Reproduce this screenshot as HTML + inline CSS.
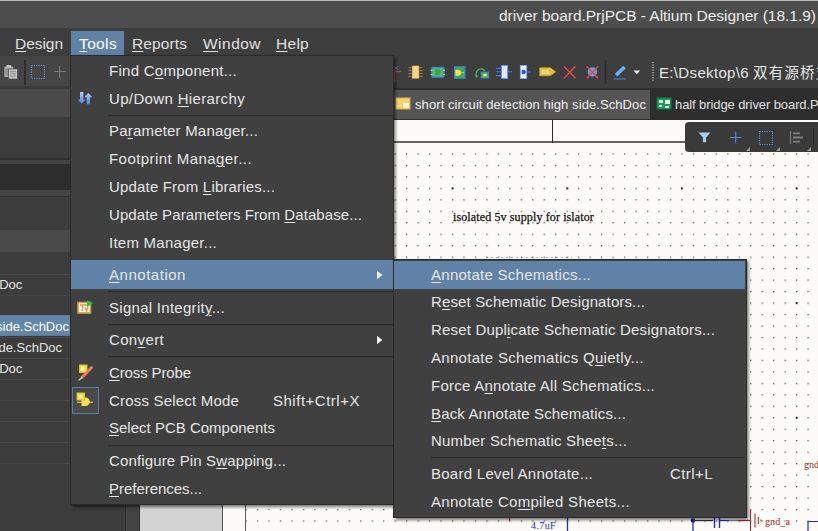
<!DOCTYPE html>
<html><head><meta charset="utf-8"><title>Altium Designer</title>
<style>
html,body{margin:0;padding:0;}
body{width:818px;height:531px;overflow:hidden;position:relative;background:#3f3f3f;font-family:"Liberation Sans","Noto Sans CJK SC",sans-serif;}
.a{position:absolute;}
.t{position:absolute;line-height:28px;height:28px;white-space:nowrap;font-family:"Liberation Sans","Noto Sans CJK SC",sans-serif;}
.t u{text-decoration:underline;text-underline-offset:1.6px;text-decoration-thickness:1px;}
.sep{left:108px;width:285px;height:2px;background:linear-gradient(to bottom,#2c2c2c 0,#2c2c2c 1px,#393939 1px,#393939 2px);}

</style></head><body>
<!-- base chrome -->
<div class="a" style="left:0;top:0;width:818px;height:28px;background:#4d4d4d;"></div>
<div class="a" style="left:0;top:0;width:818px;height:1px;background:#bdbdbd;"></div>
<div class="a" style="left:0;top:28px;width:818px;height:28px;background:#3e3e3e;"></div>
<div class="a" style="left:71px;top:31px;width:53px;height:25px;background:#5f82a6;"></div>
<!-- toolbar -->
<div class="a" style="left:0;top:56px;width:818px;height:32px;background:#3e3e3e;"></div>
<div class="a" style="left:0;top:56px;width:70px;height:30px;background:#454545;"></div>
<div class="a" style="left:0;top:86px;width:70px;height:3px;background:#3a3a3a;"></div>
<svg class="a" style="left:0;top:56px;" width="70" height="32" viewBox="0 0 70 32">
  <rect x="4.3" y="10.5" width="9" height="10.5" rx="0.8" fill="#a8a8a8"/>
  <rect x="6.6" y="9" width="4.4" height="2.6" rx="0.6" fill="#c6c6c6"/>
  <path d="M5.6 13.5h4M5.6 15.8h3M5.6 18.1h3" stroke="#6a6a6a" stroke-width="0.8"/>
  <rect x="8.6" y="13" width="8.8" height="10" fill="#c2c2c2" stroke="#505050" stroke-width="0.7"/>
  <path d="M10.2 15.6h5.6M10.2 17.8h5.6M10.2 20h5.6" stroke="#7a7a7a" stroke-width="0.8"/>
  <rect x="24" y="4" width="2" height="25" fill="#2d2d2d"/>
  <rect x="31.5" y="9.5" width="13" height="13" fill="none" stroke="#6a8cd8" stroke-width="1.2" stroke-dasharray="1.3 1.05"/>
  <path d="M54 15.5h12M59.5 10v12" stroke="#7a7a7a" stroke-width="1" fill="none"/>
</svg>
<!-- toolbar icons right -->
<svg class="a" style="left:393px;top:56px;" width="270" height="32" viewBox="393 56 270 32">
  <!-- partial icon -->
  <path d="M394.5 71.7v10M394.5 71.7h6.5" stroke="#c04a4a" stroke-width="1" fill="none"/>
  <path d="M394.5 66.3l3.6 3.6M398.1 66.3l-3.6 3.6" stroke="#5a84d0" stroke-width="0.9" fill="none"/>
  <!-- IC yellow -->
  <path d="M408.3 67.7h14.4M408.3 70.6h14.4M408.3 73.5h14.4M408.3 76.4h14.4" stroke="#b8923c" stroke-width="0.8"/>
  <rect x="412.3" y="66" width="6.5" height="12.2" fill="#f7d488" stroke="#ecc060" stroke-width="0.6"/>
  <!-- blue/green -->
  <rect x="431.8" y="67.6" width="12" height="9.4" rx="1" fill="#4fc06a" stroke="#4a80d8" stroke-width="1.5"/>
  <rect x="435" y="69.5" width="5.6" height="5.6" fill="#38a855"/>
  <path d="M430.5 70.2h2.2M430.5 74.6h2.2M442.9 70.2h2.2M442.9 74.6h2.2" stroke="#d8e060" stroke-width="1"/>
  <!-- green sq with yellow gate -->
  <rect x="454.5" y="66.8" width="10.4" height="11.4" fill="#3aa858" stroke="#4a80d8" stroke-width="1.2"/>
  <path d="M455.4 69.7h2.6a3 3 0 0 1 0 6h-2.6z" fill="#f4e44a"/>
  <path d="M461 72.7h3" stroke="#f4e44a" stroke-width="0.8"/>
  <!-- arc with box -->
  <path d="M476.8 77a4.8 5.2 0 1 1 8.4 -5.6" fill="none" stroke="#3fae5a" stroke-width="1.4"/>
  <path d="M474.8 75.2l2 2.8l1.8 -2.6z" fill="#3fae5a"/>
  <rect x="481.2" y="72.2" width="7.4" height="5.8" fill="#3fae5a" stroke="#4a80d8" stroke-width="1"/>
  <rect x="483.2" y="73.8" width="3.4" height="2.6" fill="#e8e860"/>
  <!-- connector -->
  <rect x="501.6" y="65.6" width="6" height="12.8" fill="#dce8ff" stroke="#6a9af0" stroke-width="0.9"/>
  <path d="M496 68.2h5.4M496 71.8h5.4M496 75.6h5.4M507.8 71.8h4.2" stroke="#4a7ee0" stroke-width="1.1"/>
  <!-- port -->
  <rect x="520.4" y="65.6" width="6.2" height="12.8" fill="#e6eeff" stroke="#8ab0f4" stroke-width="0.9"/>
  <circle cx="523.6" cy="72" r="2.2" fill="#2f55d0"/>
  <path d="M526.8 72h4.2" stroke="#4a7ee0" stroke-width="1.1"/>
  <!-- tag D1 -->
  <path d="M539.7 67.8h10.6l5.4 4l-5.4 4h-10.6z" fill="#e8c040" stroke="#c8a030" stroke-width="0.7"/>
  <text x="541.6" y="74.2" font-size="6" fill="#fff8d8" font-family="Liberation Sans, sans-serif">D1</text>
  <!-- red X -->
  <path d="M564 66.2l11.6 12M575.6 66.2l-11.6 12" stroke="#e04848" stroke-width="1.5" fill="none"/>
  <!-- blue dot with red X -->
  <circle cx="592.4" cy="71.9" r="4.7" fill="#6aa0f0"/>
  <path d="M586.6 66.2l11.6 12M598.2 66.2l-11.6 12" stroke="#e04848" stroke-width="1.5" fill="none"/>
  <!-- separator -->
  <rect x="604.8" y="60.3" width="1.5" height="24" fill="#2a2a2a"/>
  <!-- pencil -->
  <path d="M616 75.2l8.6 -8.2" stroke="#6ab4f0" stroke-width="3.6" stroke-linecap="butt"/>
  <path d="M613.8 77l1 -3l2.6 2.4z" fill="#2a4a90"/>
  <path d="M613.7 78.9h12.4" stroke="#3a80c8" stroke-width="1.2"/>
  <path d="M633.4 70.6h6.8l-3.4 3.6z" fill="#e4e4e4"/>
  <!-- dotted sep -->
  <path d="M653 62v20" stroke="#8a8a8a" stroke-width="2" stroke-dasharray="1.2 1.3"/>
</svg>
<!-- left panel -->
<div class="a" style="left:0;top:89px;width:140px;height:442px;background:#3c3c3c;"></div>
<div class="a" style="left:0;top:89px;width:126px;height:28px;background:#4a4a4a;"></div>
<div class="a" style="left:0;top:158px;width:126px;height:2px;background:#303030;"></div>
<div class="a" style="left:0;top:160px;width:126px;height:4px;background:#444;"></div>
<div class="a" style="left:0;top:164px;width:126px;height:26px;background:#2d2d2d;"></div>
<div class="a" style="left:0;top:190px;width:126px;height:6px;background:#444;"></div>
<div class="a" style="left:0;top:196px;width:126px;height:1px;background:#303030;"></div>
<div class="a" style="left:0;top:230px;width:126px;height:22px;background:#4a4a4a;"></div>
<div class="a" style="left:0;top:274px;width:126px;height:190px;background:repeating-linear-gradient(to bottom,#464646 0,#464646 1px,transparent 1px,transparent 21px);"></div>
<div class="a" style="left:0;top:315px;width:70px;height:20.5px;background:#6385a8;box-sizing:border-box;border-top:1px solid #587a9c;border-bottom:1px solid #587a9c;"></div>
<!-- vertical splitter -->
<div class="a" style="left:125.4px;top:88px;width:14.6px;height:443px;background:#434343;box-sizing:border-box;border-left:1.2px solid #2e2e2e;border-right:1.2px solid #2e2e2e;"></div>
<!-- tab bar -->
<div class="a" style="left:140px;top:88px;width:678px;height:32px;background:#2e2e2e;"></div>
<div class="a" style="left:393px;top:90px;width:257px;height:29px;background:#555555;"></div>
<svg class="a" style="left:393px;top:90px;" width="290" height="29" viewBox="0 0 290 29">
  <rect x="3" y="8" width="14" height="11" fill="#f2d273" stroke="#d8b04a" stroke-width="1"/>
  <rect x="10" y="13" width="6" height="5" fill="#fff6d0"/>
  <rect x="264" y="8" width="14" height="11" fill="#1f9a55" stroke="#157a40" stroke-width="1"/>
  <rect x="266" y="10" width="4" height="3" fill="#d8ffe8"/><rect x="272" y="10" width="5" height="4" fill="#eafff0"/><rect x="266" y="15" width="3" height="2" fill="#d8ffe8"/><rect x="272" y="16" width="4" height="2" fill="#d8ffe8"/>
</svg>
<!-- canvas -->
<div class="a" style="left:140px;top:120px;width:678px;height:411px;background:#fcfbf7;"></div>
<svg class="a" style="left:246px;top:148px;" width="572" height="383" viewBox="0 5 572 383">
  <defs>
    <pattern id="dots" x="10.91" y="10.34" width="11.47" height="11.47" patternUnits="userSpaceOnUse"><rect x="0" y="0" width="1.3" height="1.3" fill="#5c5c5c"/></pattern>
    <pattern id="bigdots" x="90.9" y="44.4" width="114.7" height="114.7" patternUnits="userSpaceOnUse"><rect x="0" y="0" width="1.8" height="1.9" fill="#1a1a1a"/></pattern>
  </defs>
  <rect width="572" height="388" fill="url(#dots)"/>
  <rect width="572" height="388" fill="url(#bigdots)"/>
</svg>
<div class="a" style="left:140px;top:120px;width:82px;height:411px;background:#d2d2d2;"></div>
<div class="a" style="left:222px;top:120px;width:1px;height:411px;background:#555;"></div>
<div class="a" style="left:245px;top:142px;width:1px;height:389px;background:#555;"></div>
<div class="a" style="left:245px;top:141.3px;width:440px;height:2px;background:#626262;"></div>
<div class="a" style="left:551.6px;top:120px;width:1.7px;height:23px;background:#2a2a2a;"></div>
<div class="a" style="left:486px;top:257px;width:86px;height:1px;opacity:.4;background:repeating-linear-gradient(to right,#3a3ac8 0,#3a3ac8 2px,transparent 2px,transparent 5px);"></div>
<!-- schematic bits -->
<svg class="a" style="left:480px;top:500px;" width="338" height="31" viewBox="0 0 338 31">
  <circle cx="213" cy="20.5" r="2.2" fill="#101080"/>
  <path d="M213 20.5h20" stroke="#333" stroke-width="1.2"/>
  <path d="M213 20.5v11M87.5 17v14" stroke="#2a2ad0" stroke-width="1.3"/><path d="M29.5 17v4" stroke="#b03030" stroke-width="1.2"/>
  <path d="M240 20.5h9" stroke="#2a2ad0" stroke-width="1.2"/>
  <path d="M234.5 14v14M239.5 14v14" stroke="#2a2ad0" stroke-width="1.4"/>
  <path d="M249 20.5h9" stroke="#888" stroke-width="1.2"/>
  <path d="M258 20.5h12" stroke="#a03030" stroke-width="1.2"/>
  <path d="M270.5 10v21M275 13.5v14M278.3 17v7M281 19.5v2" stroke="#a03030" stroke-width="1.1"/>
  <path d="M328 31v-9.5h10" stroke="#2a2ad0" stroke-width="1.2" fill="none"/>
</svg>
<!-- floating toolbar -->
<div class="a" style="left:685px;top:122px;width:140px;height:29.5px;background:#3a3a3a;border-radius:4px;"></div>
<svg class="a" style="left:685px;top:122px;" width="133" height="29" viewBox="0 0 133 29">
  <path d="M13.5 10.5h12l-4.4 4.9v4.8h-3.2v-4.8z" fill="#a6cdf0"/>
  <path d="M45 15.5h11.5M50.7 9.8v11.5" stroke="#5a86e0" stroke-width="1.1"/>
  <rect x="74.5" y="9.5" width="13" height="13" fill="none" stroke="#5a86e0" stroke-width="1.2" stroke-dasharray="1.3 1.05"/>
  <path d="M105.5 9v13" stroke="#7a7a7a" stroke-width="1.2"/>
  <path d="M108 11.3h7M108 15.5h10M108 19.7h7" stroke="#7e7e7e" stroke-width="1.8"/>
  <path d="M65 25v4h-4zM95 25v4h-4zM126 25v4h-4z" fill="#9a9a9a"/>
  <rect x="128" y="6" width="1" height="18" fill="#2a2a2a"/>
</svg>
<span class="t" id="t6" style="left:659px;top:58.8px;font-size:15px;color:#e6e6e6;letter-spacing:0.342px;">E:\Dsektop\6</span>
<span class="t" id="t7" style="left:753px;top:59.28px;font-size:14.5px;color:#e6e6e6;letter-spacing:1.200px;">双有源桥支</span>
<span class="t" id="t8" style="left:415px;top:90.5px;font-size:13px;color:#f0f0f0;letter-spacing:0.084px;">short circuit detection high side.SchDoc</span>
<span class="t" id="t9" style="left:675px;top:90.5px;font-size:13px;color:#e0e0e0;letter-spacing:-0.091px;">half bridge driver board.PcbDoc</span>
<span class="t" id="t10" style="right:795.7px;top:270.5px;font-size:13px;color:#e4e4e4;letter-spacing:0.000px;">short circuit.SchDoc</span>
<span class="t" id="t11" style="right:749px;top:312.5px;font-size:13px;color:#ffffff;letter-spacing:0.000px;">short circuit detection high side.SchDoc</span>
<span class="t" id="t12" style="right:756px;top:333.5px;font-size:13px;color:#e4e4e4;letter-spacing:0.000px;">short circuit detection low side.SchDoc</span>
<span class="t" id="t13" style="right:795.7px;top:354.5px;font-size:13px;color:#e4e4e4;letter-spacing:0.000px;">driver board.PcbDoc</span>
<span class="t" id="t14" style="left:453px;top:202.84px;font-size:12px;color:#111;letter-spacing:0.122px;font-family:'Liberation Serif', serif;-webkit-text-stroke:0.25px #111;">isolated 5v supply for islator</span>
<span class="t" id="t15" style="left:804px;top:451.04px;font-size:10px;color:#9a2a2a;letter-spacing:0.000px;font-family:'Liberation Serif', serif;">gnd_b</span>
<span class="t" id="t16" style="left:765px;top:507.54px;font-size:10px;color:#9a2a2a;letter-spacing:0.109px;font-family:'Liberation Serif', serif;">gnd_a</span>
<span class="t" id="t17" style="left:531px;top:512.03px;font-size:10px;color:#2a2ab0;letter-spacing:0.388px;font-family:'Liberation Serif', serif;">4.7uF</span>
<!-- main menu -->
<div class="a" style="left:70px;top:55px;width:324px;height:450px;background:#404040;border:1px solid #2b2b2b;box-sizing:border-box;box-shadow:1.5px 2px 3px rgba(0,0,0,.55);"></div>
<div class="a" style="left:71px;top:260px;width:322px;height:29px;background:#5f82a6;"></div>
<div class="a sep" style="top:115px;"></div>
<div class="a sep" style="top:291px;"></div>
<div class="a sep" style="top:324px;"></div>
<div class="a sep" style="top:356px;"></div>
<div class="a sep" style="top:445px;"></div>
<svg class="a" style="left:71px;top:56px;" width="322" height="448" viewBox="71 56 322 448">
  <defs><linearGradient id="bl" x1="0" y1="0" x2="0" y2="1"><stop offset="0" stop-color="#b4cdf6"/><stop offset="1" stop-color="#4282e6"/></linearGradient></defs>
  <!-- up/down -->
  <path d="M80 92h3.4v7.5h2.3l-4 4.2l-4-4.2h2.3z" fill="url(#bl)"/>
  <path d="M86.6 104.3h3.4v-7h2.3l-4-4.3l-4 4.3h2.3z" fill="url(#bl)"/>
  <!-- signal integrity -->
  <rect x="78" y="302.5" width="12.5" height="10.5" fill="#fff6e6" stroke="#cf9a45" stroke-width="1.6"/>
  <path d="M80 305h8M82.5 305v6M85 307l1.5 4l1.5 -4" stroke="#cf9a45" stroke-width="1.3" fill="none"/>
  <path d="M87 300v7l6 -3.5z" fill="#2fc040"/>
  <!-- cross probe -->
  <rect x="79.5" y="365" width="7.5" height="7.5" fill="#f2e04a" stroke="#d8c030" stroke-width="1"/>
  <rect x="81.5" y="367" width="3" height="3" fill="#fffbd0"/>
  <path d="M91.5 367.5l-9.5 10" stroke="#e87868" stroke-width="3" stroke-linecap="round"/>
  <path d="M82 377.5l-3.5 3" stroke="#c8c8c8" stroke-width="1.2"/>
  <!-- cross select -->
  <rect x="72.5" y="387.5" width="26" height="26" fill="#4a4a4a" stroke="#5b7c9e" stroke-width="1"/>
  <path d="M77 402.3h16" stroke="#e8c838" stroke-width="1.2"/>
  <path d="M81.5 397.5h4a4.3 4.3 0 0 1 0 8.6h-4z" fill="#f6dc60"/>
  <rect x="77" y="393" width="7.5" height="7" fill="#f2e04a" stroke="#d8c030" stroke-width="1"/>
  <rect x="79" y="395" width="3" height="3" fill="#fffbd0"/>
  <!-- arrows -->
  <path d="M377 270.7l5.4 4.3l-5.4 4.3z" fill="#f0f0f0"/>
  <path d="M377 335.7l5.4 4.3l-5.4 4.3z" fill="#f0f0f0"/>
</svg>
<!-- submenu -->
<div class="a" style="left:393px;top:259px;width:354px;height:259px;background:#404040;border:1px solid #2b2b2b;box-sizing:border-box;box-shadow:1.5px 2px 3px rgba(0,0,0,.55);"></div>
<div class="a" style="left:394px;top:261px;width:351px;height:28px;background:#5f82a6;"></div>
<div class="a" style="left:431px;top:457px;width:314px;height:1px;background:#2c2c2c;"></div>

<span class="t" id="t0" style="left:499px;top:1.63px;font-size:15.5px;color:#ececec;letter-spacing:-0.019px;">driver board.PrjPCB - Altium Designer (18.1.9)</span>
<span class="t" id="t1" style="left:15px;top:29.53px;font-size:15.5px;color:#e0e0e0;letter-spacing:-0.044px;"><u>D</u>esign</span>
<span class="t" id="t2" style="left:79px;top:29.53px;font-size:15.5px;color:#ffffff;letter-spacing:0.362px;"><u>T</u>ools</span>
<span class="t" id="t3" style="left:132px;top:29.53px;font-size:15.5px;color:#e0e0e0;letter-spacing:0.100px;"><u>R</u>eports</span>
<span class="t" id="t4" style="left:203px;top:29.53px;font-size:15.5px;color:#e0e0e0;letter-spacing:0.477px;"><u>W</u>indow</span>
<span class="t" id="t5" style="left:276px;top:29.53px;font-size:15.5px;color:#e0e0e0;letter-spacing:0.277px;"><u>H</u>elp</span>
<span class="t" id="t18" style="left:109px;top:56.8px;font-size:15px;color:#e6e6e6;letter-spacing:0.269px;">Find C<u>o</u>mponent...</span>
<span class="t" id="t19" style="left:109px;top:84.8px;font-size:15px;color:#e6e6e6;letter-spacing:0.349px;">Up/Down <u>H</u>ierarchy</span>
<span class="t" id="t20" style="left:109px;top:116.8px;font-size:15px;color:#e6e6e6;letter-spacing:0.195px;">Pa<u>r</u>ameter Manager...</span>
<span class="t" id="t21" style="left:109px;top:144.8px;font-size:15px;color:#e6e6e6;letter-spacing:0.438px;">Footprint Mana<u>g</u>er...</span>
<span class="t" id="t22" style="left:109px;top:172.8px;font-size:15px;color:#e6e6e6;letter-spacing:0.178px;">Update From <u>L</u>ibraries...</span>
<span class="t" id="t23" style="left:109px;top:200.8px;font-size:15px;color:#e6e6e6;letter-spacing:0.084px;">Update Parameters From <u>D</u>atabase...</span>
<span class="t" id="t24" style="left:109px;top:228.8px;font-size:15px;color:#e6e6e6;letter-spacing:0.252px;">Item Manager...</span>
<span class="t" id="t25" style="left:109px;top:260.8px;font-size:15px;color:#e6e6e6;letter-spacing:0.525px;"><u>A</u>nnotation</span>
<span class="t" id="t26" style="left:109px;top:293.8px;font-size:15px;color:#e6e6e6;letter-spacing:0.282px;">Signal Integrit<u>y</u>...</span>
<span class="t" id="t27" style="left:109px;top:325.8px;font-size:15px;color:#e6e6e6;letter-spacing:0.350px;">Con<u>v</u>ert</span>
<span class="t" id="t28" style="left:109px;top:358.8px;font-size:15px;color:#e6e6e6;letter-spacing:-0.126px;"><u>C</u>ross Probe</span>
<span class="t" id="t29" style="left:109px;top:386.8px;font-size:15px;color:#e6e6e6;letter-spacing:0.193px;">Cross Select Mode</span>
<span class="t" id="t30" style="left:109px;top:413.8px;font-size:15px;color:#e6e6e6;letter-spacing:0.003px;"><u>S</u>elect PCB Components</span>
<span class="t" id="t31" style="left:109px;top:446.8px;font-size:15px;color:#e6e6e6;letter-spacing:0.142px;">Configure Pin S<u>w</u>apping...</span>
<span class="t" id="t32" style="left:109px;top:474.8px;font-size:15px;color:#e6e6e6;letter-spacing:-0.028px;"><u>P</u>references...</span>
<span class="t" id="t33" style="left:273px;top:386.8px;font-size:15px;color:#e6e6e6;letter-spacing:0.510px;">Shift+Ctrl+X</span>
<span class="t" id="t34" style="left:431px;top:260.8px;font-size:15px;color:#e6e6e6;letter-spacing:0.261px;"><u>A</u>nnotate Schematics...</span>
<span class="t" id="t35" style="left:431px;top:287.8px;font-size:15px;color:#e6e6e6;letter-spacing:0.130px;">R<u>e</u>set Schematic Designators...</span>
<span class="t" id="t36" style="left:431px;top:315.8px;font-size:15px;color:#e6e6e6;letter-spacing:0.180px;">Reset Dupl<u>i</u>cate Schematic Designators...</span>
<span class="t" id="t37" style="left:431px;top:343.8px;font-size:15px;color:#e6e6e6;letter-spacing:0.299px;">Annotate Schematics Q<u>u</u>ietly...</span>
<span class="t" id="t38" style="left:431px;top:371.8px;font-size:15px;color:#e6e6e6;letter-spacing:0.251px;">Force A<u>n</u>notate All Schematics...</span>
<span class="t" id="t39" style="left:431px;top:399.8px;font-size:15px;color:#e6e6e6;letter-spacing:0.150px;"><u>B</u>ack Annotate Schematics...</span>
<span class="t" id="t40" style="left:431px;top:426.8px;font-size:15px;color:#e6e6e6;letter-spacing:0.195px;">Number Schematic Shee<u>t</u>s...</span>
<span class="t" id="t41" style="left:431px;top:459.8px;font-size:15px;color:#e6e6e6;letter-spacing:0.263px;">Board Level Annotate...</span>
<span class="t" id="t42" style="left:431px;top:487.8px;font-size:15px;color:#e6e6e6;letter-spacing:0.297px;">Annotate Co<u>m</u>piled Sheets...</span>
<span class="t" id="t43" style="left:670px;top:459.8px;font-size:15px;color:#e6e6e6;letter-spacing:0.427px;">Ctrl+L</span>
</body></html>
